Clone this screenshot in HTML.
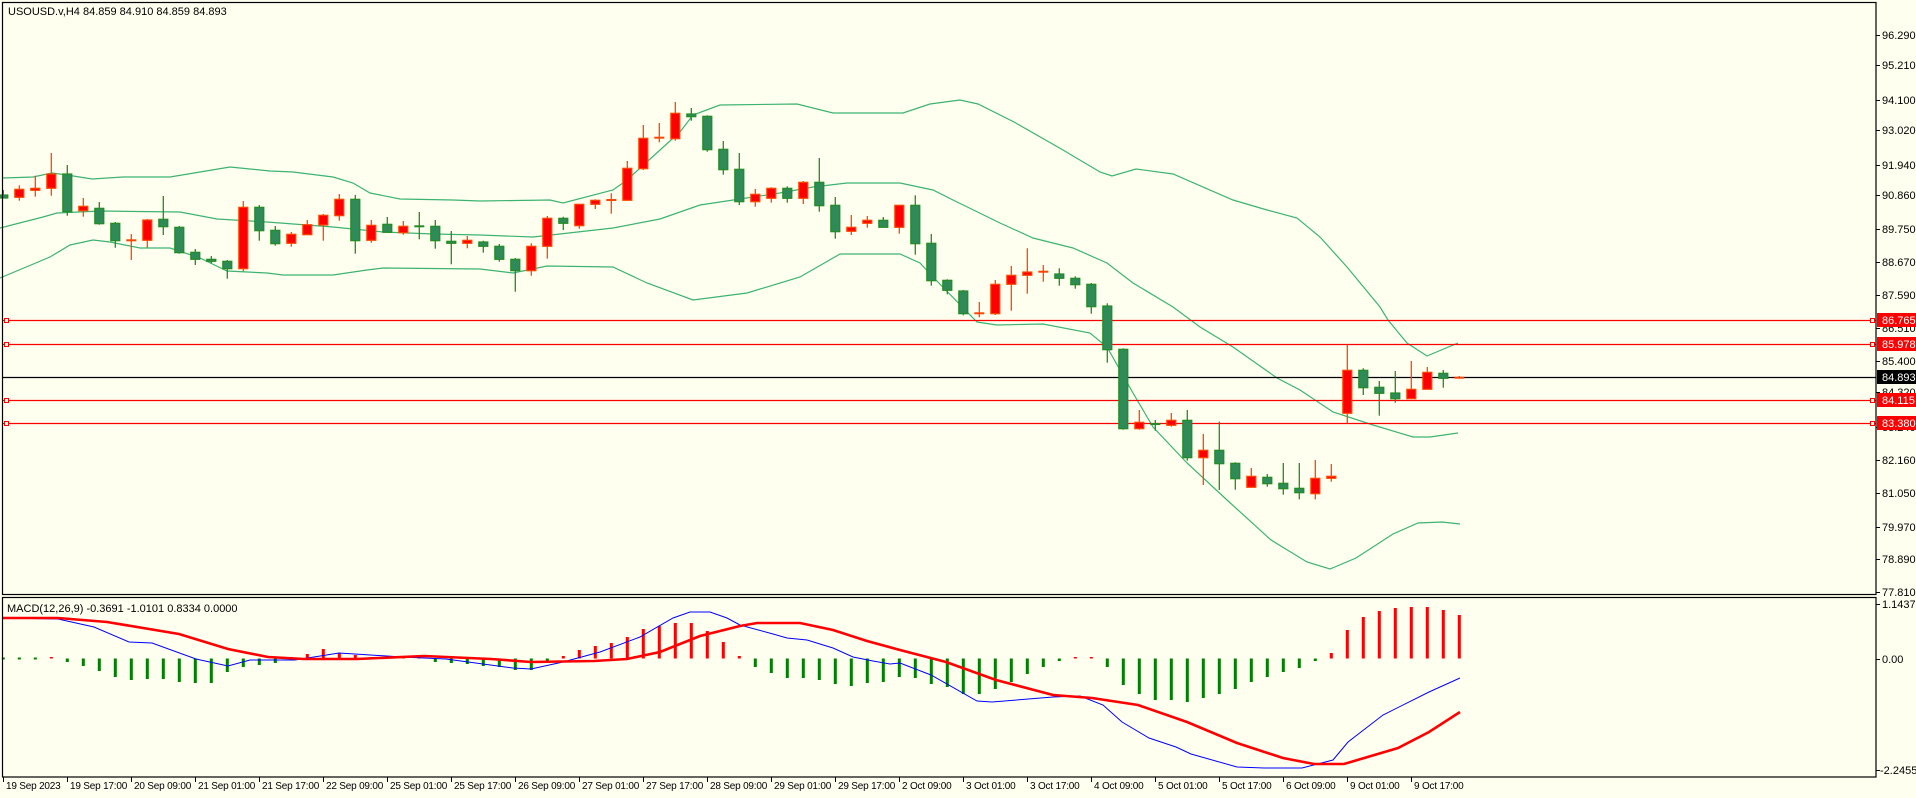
<!DOCTYPE html>
<html><head><meta charset="utf-8"><style>
html,body{margin:0;padding:0;background:#FFFFF0;}
svg{display:block;}
text{font-family:"Liberation Sans",sans-serif;font-size:11px;fill:#000;}
#tl text{font-size:10px;letter-spacing:-0.2px;}
</style></head><body>
<svg id="s" width="1916" height="798" viewBox="0 0 1916 798" xmlns="http://www.w3.org/2000/svg">
<rect x="0" y="0" width="1916" height="798" fill="#FFFFF0"/>
<g id="bands" fill="none" stroke="#3CB371" stroke-width="1.2">
<polyline points="3,178 33,177 52,173 67,175 92,179 123,177 170,177 200,172 230,167 270,171 293,172 333,177 353,183 370,193 400,199 453,200 480,201 550,200 563,203 613,190 627,180 660,150 680,132 693,115 720,105 797,104 833,113 903,113 930,104 960,100 978,104 1014,122 1063,150 1100,172 1112,176 1136,169 1173,174 1233,200 1267,210 1297,218 1320,237 1347,267 1380,307 1388,320 1407,343 1427,356 1458,343"/>
<polyline points="0,228 43,217 57,213 100,211 180,212 217,219 267,222 333,227 383,232 433,234 480,235 533,237 560,234 613,228 660,219 700,205 740,199 780,193 813,187 847,183 900,183 933,190 953,200 1000,223 1033,238 1073,248 1107,263 1133,283 1173,307 1200,327 1233,347 1277,378 1300,390 1333,412 1373,425 1413,437 1430,437 1458,433"/>
<polyline points="0,278 50,257 70,245 93,240 110,242 140,248 170,248 200,258 227,271 267,273 283,275 333,275 367,270 383,268 480,269 513,273 547,266 613,267 647,283 693,300 747,293 800,277 840,254 900,254 920,263 933,277 977,322 997,325 1043,324 1090,333 1107,347 1133,393 1153,427 1187,463 1227,500 1271,540 1307,562 1330,569 1356,558 1393,534 1418,523 1442,522 1460,524"/>
</g>
<g id="hl" stroke-width="1.2">
<line x1="3" y1="320.5" x2="1876" y2="320.5" stroke="#FF0000"/>
<line x1="3" y1="344.5" x2="1876" y2="344.5" stroke="#FF0000"/>
<line x1="3" y1="377.5" x2="1876" y2="377.5" stroke="#000"/>
<line x1="3" y1="400.5" x2="1876" y2="400.5" stroke="#FF0000"/>
<line x1="3" y1="423.5" x2="1876" y2="423.5" stroke="#FF0000"/>
</g>
<g fill="#FFFFF0" stroke="#FF0000" stroke-width="1">
<rect x="4.5" y="318.5" width="4" height="4"/><rect x="4.5" y="342.5" width="4" height="4"/><rect x="4.5" y="398.5" width="4" height="4"/><rect x="4.5" y="421.5" width="4" height="4"/>
<rect x="1870.5" y="318.5" width="4" height="4"/><rect x="1870.5" y="342.5" width="4" height="4"/><rect x="1870.5" y="398.5" width="4" height="4"/><rect x="1870.5" y="421.5" width="4" height="4"/>
</g>
<g id="candles"></g>
<g id="hist"></g>
<polyline fill="none" stroke="#0000FF" stroke-width="1" points="3,618 58,619 94,627 129,642 152,643 196,659 228,666 250,660 295,660 339,653 402,657 446,659 513,668 531,669 563,662 600,652 640,637 673,618 690,612 710,612 727,618 740,625 773,634 787,638 807,640 833,648 853,657 873,661 890,664 900,663 931,675 977,701 992,702 1053,697 1080,696 1103,705 1122,722 1149,738 1176,747 1191,754 1237,767 1264,768 1302,768 1333,760 1348,742 1383,715 1429,692 1460,678"/>
<polyline fill="none" stroke="#FF0000" stroke-width="2.6" points="3,618 58,618 107,622 179,634 228,649 268,657 304,659 357,659 424,656 491,659 531,662 594,661 627,659 660,652 700,636 740,626 757,623 800,623 833,630 867,641 900,650 946,662 996,680 1053,695 1092,698 1138,705 1187,722 1237,743 1283,758 1314,764 1344,764 1398,748 1429,732 1460,712"/>
<g fill="none" stroke="#000" stroke-width="1.2">
<rect x="2.5" y="2.5" width="1873.5" height="592"/>
<rect x="2.5" y="597.5" width="1873.5" height="179.5"/>
</g>
<g id="ticks" stroke="#000" stroke-width="1"></g>
<text x="8" y="15">USOUSD.v,H4  84.859 84.910 84.859 84.893</text>
<text x="7" y="612">MACD(12,26,9) -0.3691 -1.0101 0.8334 0.0000</text>
<g id="plab">
<text x="1882" y="39">96.290</text><text x="1882" y="69">95.210</text><text x="1882" y="104">94.100</text><text x="1882" y="134">93.020</text><text x="1882" y="169">91.940</text><text x="1882" y="199">90.860</text><text x="1882" y="233">89.750</text><text x="1882" y="266">88.670</text><text x="1882" y="299">87.590</text><text x="1882" y="332">86.510</text><text x="1882" y="365">85.400</text><text x="1882" y="396">84.320</text><text x="1882" y="431">83.240</text><text x="1882" y="464">82.160</text><text x="1882" y="497">81.050</text><text x="1882" y="531">79.970</text><text x="1882" y="563">78.890</text><text x="1882" y="596">77.810</text>
<text x="1882" y="608">1.1437</text><text x="1882" y="663">0.00</text><text x="1880" y="774">-2.2455</text>
</g>
<rect x="1877" y="313" width="39" height="14" fill="#FF0000"/><text x="1882" y="324" style="fill:#fff">86.765</text>
<rect x="1877" y="337" width="39" height="14" fill="#FF0000"/><text x="1882" y="348" style="fill:#fff">85.978</text>
<rect x="1877" y="370" width="39" height="14" fill="#000"/><text x="1882" y="381" style="fill:#fff">84.893</text>
<rect x="1877" y="393" width="39" height="14" fill="#FF0000"/><text x="1882" y="404" style="fill:#fff">84.115</text>
<rect x="1877" y="416" width="39" height="14" fill="#FF0000"/><text x="1882" y="427" style="fill:#fff">83.380</text>
<g id="tl">
<text x="6" y="789">19 Sep 2023</text><text x="70" y="789">19 Sep 17:00</text><text x="134" y="789">20 Sep 09:00</text><text x="198" y="789">21 Sep 01:00</text><text x="262" y="789">21 Sep 17:00</text><text x="326" y="789">22 Sep 09:00</text><text x="390" y="789">25 Sep 01:00</text><text x="454" y="789">25 Sep 17:00</text><text x="518" y="789">26 Sep 09:00</text><text x="582" y="789">27 Sep 01:00</text><text x="646" y="789">27 Sep 17:00</text><text x="710" y="789">28 Sep 09:00</text><text x="774" y="789">29 Sep 01:00</text><text x="838" y="789">29 Sep 17:00</text><text x="902" y="789">2 Oct 09:00</text><text x="966" y="789">3 Oct 01:00</text><text x="1030" y="789">3 Oct 17:00</text><text x="1094" y="789">4 Oct 09:00</text><text x="1158" y="789">5 Oct 01:00</text><text x="1222" y="789">5 Oct 17:00</text><text x="1286" y="789">6 Oct 09:00</text><text x="1350" y="789">9 Oct 01:00</text><text x="1414" y="789">9 Oct 17:00</text>
</g>
</svg>
<script>
var NS="http://www.w3.org/2000/svg";
function el(p,t,a){var e=document.createElementNS(NS,t);for(var k in a)e.setAttribute(k,a[k]);p.appendChild(e);return e;}
var C=[["g",195,198,190,198],["r",189.3,197.3,185.3,200.7],["r",188.3,190.3,175.7,196.7],["r",174,188.3,153,195.7],["g",174,211.7,165,215.7],["r",206.3,210.7,198,216.7],["g",208.3,223.7,202,224.7],["g",223.3,240.7,222,247.7],["r",240.3,240.3,234,260],["r",220,240.3,219,247.7],["g",219.3,226.7,196,235],["g",227.3,252.7,226,253.7],["g",252.3,259.3,249,265],["g",259.3,261.3,256,263.3],["g",261.3,268.7,260,278.7],["r",207.3,268.7,201,271.3],["g",207.3,230.7,205,240.7],["g",230.3,243.7,226,245.7],["r",234.3,243.3,232,246.7],["r",224.7,234.7,220,234.7],["r",215.3,225,214,240.7],["r",199.3,215.7,194,220.7],["g",199.3,240.7,195,253.7],["r",225.3,240.3,220,242.7],["g",224.3,232.3,217,232.3],["r",226.3,232.7,221,234.7],["g",226.3,227.7,212,239.3],["g",226.3,240.7,220,248.7],["g",241.3,243.3,231,264.3],["r",240.3,243.3,236,248.3],["g",242,246.3,240.7,252.7],["g",246.3,259.3,244,261.7],["g",259.3,270.7,258,291.7],["r",246.3,270.7,243.3,275.7],["r",218.3,246.3,216,258.7],["g",218.3,223.3,216.7,230],["r",204.3,225.7,204.3,228.7],["r",200.3,204.3,199.3,209],["r",200,200,193.3,213.7],["r",168.3,200.3,161,200.3],["r",138.3,168.7,125,170],["r",137.7,137.7,123,142.3],["r",113.3,138.7,102,140.7],["g",114,116.7,108,120.7],["g",116.3,149.7,115.3,151.7],["g",149.3,169.7,141,174.7],["g",169.3,201.7,153,205],["r",194.3,201.7,189,206.7],["r",188.3,198.3,187.3,202.7],["g",188.3,198.3,186.3,202.7],["r",182.3,198.3,181,204],["g",182.3,205.7,158,211.7],["g",205.3,231.7,197,238.7],["r",227.3,231.3,215,235],["r",220.3,223.3,216,227.7],["g",220.3,227.3,217,227.3],["r",205.3,227.3,205.3,233.7],["g",205.3,243.7,195.3,254.7],["g",243.3,280.7,234,285.7],["g",280.3,290.3,279.3,294.3],["g",291,313.7,290,315.3],["r",313.3,313.3,302,317.3],["r",284.3,313.7,280,315],["r",275.3,284.3,266,310.7],["r",272,275.3,248.3,293.7],["r",271.7,271.7,265,281.7],["g",274,278.3,268.3,285.7],["g",278.3,284.7,276.3,288.7],["g",284.3,306.7,283,313.7],["g",306,349.7,303.3,362.7],["g",349.3,428.7,348.3,429.7],["r",422.3,428.7,410,429.7],["g",424,425.7,420,430.7],["r",420.3,425.3,413,426.7],["g",420.3,457.7,410,460.7],["r",450.3,457.7,434,485],["g",450.3,463.7,421.7,490],["g",463.3,478.7,462.3,489.7],["r",476.3,487.3,468,487.3],["g",477.3,483.7,474,486.7],["g",483.3,488.7,463,494.7],["g",488.3,492.7,463,499.3],["r",478.3,493.7,460,499.3],["r",476.3,478.3,464,481.7],["r",370.3,413.3,344.3,423.3],["g",370.3,387.7,368.3,395],["g",387.3,393.3,381,415.7],["g",393,398.7,371,402.7],["r",389.3,398.7,361,398.7],["r",372.3,389.3,367,389.3],["g",373.3,378.3,370,387.7],["r",377.7,377.7,376,378.7]];
var g=document.getElementById("candles");
C.forEach(function(c,i){var x=3.3+16*i;var red=c[0]=="r";var wc=red?"#FF4500":"#228B22";
el(g,"line",{x1:x,x2:x,y1:c[3],y2:c[4],stroke:wc,"stroke-width":1.3});
var h=c[2]-c[1];
if(h<2){el(g,"line",{x1:x-5,x2:x+5,y1:c[1],y2:c[1],stroke:wc,"stroke-width":2});}
else el(g,"rect",{x:x-4.5,y:c[1],width:9,height:h,fill:red?"#FF0000":"#2E8B57",stroke:red?"#FF4500":"#228B22","stroke-width":1.2});});
var H=[659,659,659,-657,662,666,671,677,680,679,679,682,683,683,672,667,665,663,-657,-654,-649,-653,-655,-657,-657,-657,-657,662,663,664,666,667,670,670,662,-656,-650,-646,-643,-637,-629,-626,-623,-623,-631,-642,-656,667,673,678,678,680,684,686,683,682,677,678,684,687,694,694,689,682,674,667,661,-657,-657,667,685,694,700,700,702,698,694,689,682,677,672,668,661,-653,-630,-617,-611,-608,-607,-607,-610,-615];
var hg=document.getElementById("hist");var Z=658.5;
H.forEach(function(v,i){var x=3.3+16*i;var red=v<0;v=Math.abs(v);var y1=Math.min(v,Z),y2=Math.max(v,Z);if(y2-y1<1.5){y1=Z-1;y2=Z+1;}
el(hg,"rect",{x:x-1.5,y:y1,width:3,height:y2-y1,fill:red?"#FF0000":"#008000"});});
var t=document.getElementById("ticks");
[35,65,100,130,165,195,229,262,295,328,361,392,427,460,493,527,559,592,604,659,770].forEach(function(y){el(t,"line",{x1:1876,x2:1880,y1:y+0.5,y2:y+0.5});});
for(var i=0;i<23;i++){var x=3.5+64*i;el(t,"line",{x1:x,x2:x,y1:777,y2:782});}
</script>
</body></html>
